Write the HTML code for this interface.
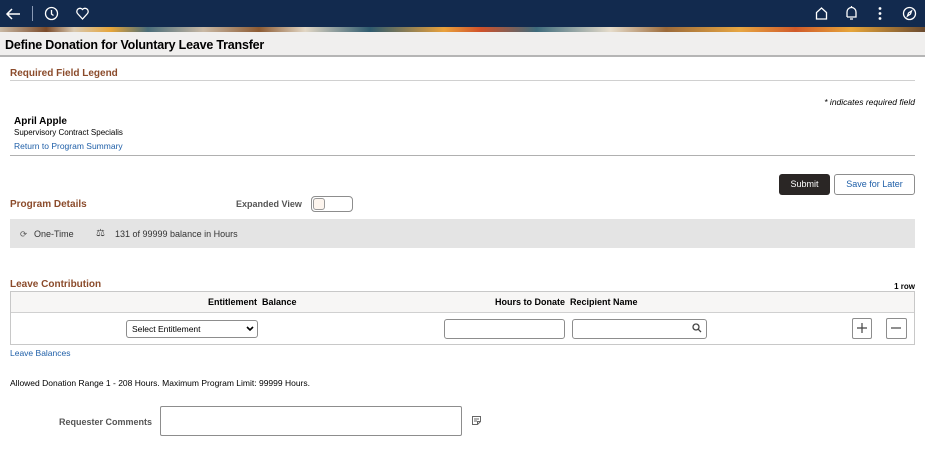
<!DOCTYPE html>
<html><head><style>
*{box-sizing:border-box;margin:0;padding:0}
body{width:925px;height:451px;background:#fff;font-family:"Liberation Sans",Arial,sans-serif;position:relative;overflow:hidden;color:#000}
.a{position:absolute}
.nav{left:0;top:0;width:925px;height:27px;background:#122a4e}
.strip{left:0;top:27px;width:925px;height:5px;background:linear-gradient(90deg,#c9b9a5 0,#7a4a2a 5%,#d8c8b0 8%,#e6a53a 12%,#4a6d7a 16%,#c9b9a5 22%,#8c5a32 28%,#e2d7c5 33%,#2e5a6e 40%,#e9a13c 48%,#d0512a 52%,#3e6b7c 58%,#e6dccb 66%,#9b6a3a 72%,#e7a642 80%,#d05a2a 86%,#e6a53a 92%,#6a4a30 100%)}
.title{left:0;top:32px;width:925px;height:25px;background:#f0efee;border-bottom:2px solid #b5b5b5;font-weight:bold;font-size:12.5px;padding:6px 0 0 5px;letter-spacing:-.2px}
.h{color:#8b4b2b;font-weight:bold;font-size:10px}
.sm{font-size:9px}
.b{font-weight:bold}
.lnk{color:#1f5fa8;font-size:8.5px}
.inp{border:1px solid #8d8d8d;border-radius:3px;background:#fff}
svg{position:absolute}
</style></head><body>
<div class="a nav"></div>
<svg style="left:5px;top:6px" width="16" height="16" viewBox="0 0 16 16" fill="none" stroke="#fff" stroke-width="1.5"><path d="M15 8H2M7 3L2 8l5 5"/></svg>
<div class="a" style="left:32px;top:6px;width:1px;height:15px;background:#8a9ab5"></div>
<svg style="left:44px;top:6px" width="15" height="15" viewBox="0 0 15 15" fill="none" stroke="#fff" stroke-width="1.3"><circle cx="7.5" cy="7.5" r="6"/><path d="M7.5 4v4l2 1.5"/></svg>
<svg style="left:75px;top:6px" width="15" height="15" viewBox="0 0 15 15" fill="none" stroke="#fff" stroke-width="1.3"><path d="M7.5 13L2.5 7.5A3 3 0 0 1 7.5 3.5A3 3 0 0 1 12.5 7.5Z"/></svg>
<svg style="left:814px;top:6px" width="15" height="15" viewBox="0 0 15 15" fill="none" stroke="#fff" stroke-width="1.3"><path d="M2.5 13V6.5L7.5 2l5 4.5V13Z"/></svg>
<svg style="left:844px;top:5px" width="15" height="16" viewBox="0 0 15 16" fill="none" stroke="#fff" stroke-width="1.3"><path d="M3 12V7a4.5 4.5 0 0 1 9 0v5H3M6 14h3M7.5 1v1.5"/></svg>
<svg style="left:876px;top:6px" width="8" height="15" viewBox="0 0 8 15" fill="#fff"><circle cx="4" cy="2.5" r="1.4"/><circle cx="4" cy="7.5" r="1.4"/><circle cx="4" cy="12.5" r="1.4"/></svg>
<svg style="left:902px;top:6px" width="15" height="15" viewBox="0 0 15 15" fill="none" stroke="#fff" stroke-width="1.3"><circle cx="7.5" cy="7.5" r="6"/><path d="M9.5 5L6.5 7 5.5 10l3-2Z"/></svg>
<div class="a strip"></div>
<div class="a title">Define Donation for Voluntary Leave Transfer</div>

<div class="a h" style="left:10px;top:68px">Required Field Legend</div>
<div class="a" style="left:10px;top:80px;width:905px;height:1px;background:#d0d0d0"></div>
<div class="a sm" style="right:10px;top:97px;font-style:italic;font-size:8.5px">* indicates required field</div>
<div class="a b" style="left:14px;top:116px;font-size:10px">April Apple</div>
<div class="a" style="left:14px;top:128px;font-size:8px">Supervisory Contract Specialis</div>
<div class="a lnk" style="left:14px;top:141px">Return to Program Summary</div>
<div class="a" style="left:10px;top:155px;width:905px;height:1px;background:#b0b0b0"></div>

<div class="a" style="left:779px;top:174px;width:51px;height:21px;background:#2a2625;border-radius:3px;color:#fff;font-size:9px;text-align:center;line-height:21px">Submit</div>
<div class="a" style="left:834px;top:174px;width:81px;height:21px;border:1px solid #8d8d8d;border-radius:3px;color:#1f5fa8;font-size:9px;text-align:center;line-height:19px">Save for Later</div>

<div class="a h" style="left:10px;top:199px">Program Details</div>
<div class="a b" style="left:236px;top:199px;font-size:9px;color:#555">Expanded View</div>
<div class="a inp" style="left:311px;top:196px;width:42px;height:16px;border-radius:4px"></div>
<div class="a" style="left:313px;top:198px;width:12px;height:12px;border:1px solid #999;border-radius:3px;background:#fdf5ee"></div>

<div class="a" style="left:10px;top:219px;width:905px;height:29px;background:#e4e4e4"></div>
<div class="a" style="left:20px;top:229px;font-size:8.5px;color:#555">⟳</div>
<div class="a" style="left:34px;top:229px;font-size:9px;color:#333">One-Time</div>
<div class="a" style="left:96px;top:228px;font-size:10px;color:#444">⚖</div>
<div class="a" style="left:115px;top:229px;font-size:9px;color:#333">131 of 99999 balance in Hours</div>

<div class="a h" style="left:10px;top:279px">Leave Contribution</div>
<div class="a b" style="right:10px;top:282px;font-size:8px">1 row</div>
<div class="a" style="left:10px;top:291px;width:905px;height:54px;border:1px solid #c8c8c8"></div>
<div class="a" style="left:11px;top:292px;width:903px;height:21px;background:#f7f6f5;border-bottom:1px solid #d0d0d0"></div>
<div class="a b" style="left:208px;top:297px;font-size:9px">Entitlement&nbsp; Balance</div>
<div class="a b" style="left:495px;top:297px;font-size:9px">Hours to Donate&nbsp; Recipient Name</div>
<div class="a inp" style="left:126px;top:320px;width:132px;height:18px;font-size:8.5px;padding:3px 0 0 5px">Select Entitlement</div>
<svg style="left:246px;top:326px" width="8" height="6" viewBox="0 0 8 6" fill="none" stroke="#000" stroke-width="1.6"><path d="M1 1l3 3 3-3"/></svg>
<div class="a inp" style="left:444px;top:319px;width:121px;height:20px"></div>
<div class="a inp" style="left:572px;top:319px;width:135px;height:20px"></div>
<svg style="left:692px;top:323px" width="10" height="10" viewBox="0 0 10 10" fill="none" stroke="#444" stroke-width="1.3"><circle cx="4" cy="4" r="3"/><path d="M6.3 6.3L9 9"/></svg>
<div class="a inp" style="left:852px;top:318px;width:20px;height:21px;border-radius:2px"></div>
<svg style="left:856px;top:322px" width="12" height="12" viewBox="0 0 12 12" stroke="#444" stroke-width="1.2"><path d="M6 1v10M1 6h10"/></svg>
<div class="a inp" style="left:886px;top:318px;width:21px;height:21px;border-radius:2px"></div>
<svg style="left:890px;top:322px" width="12" height="12" viewBox="0 0 12 12" stroke="#444" stroke-width="1.2"><path d="M1 6h10"/></svg>
<div class="a lnk" style="left:10px;top:348px">Leave Balances</div>

<div class="a" style="left:10px;top:378px;font-size:8.5px">Allowed Donation Range 1 - 208 Hours. Maximum Program Limit: 99999 Hours.</div>
<div class="a b" style="left:59px;top:417px;font-size:9px;color:#555">Requester Comments</div>
<div class="a inp" style="left:160px;top:406px;width:302px;height:30px;border-radius:2px"></div>
<svg style="left:471px;top:415px" width="11" height="11" viewBox="0 0 11 11" fill="none" stroke="#666" stroke-width="1"><path d="M1.5 1.5h8v5l-3 3h-5ZM6.5 9.5v-3h3M3 4h5M3 6h3"/></svg>
</body></html>
